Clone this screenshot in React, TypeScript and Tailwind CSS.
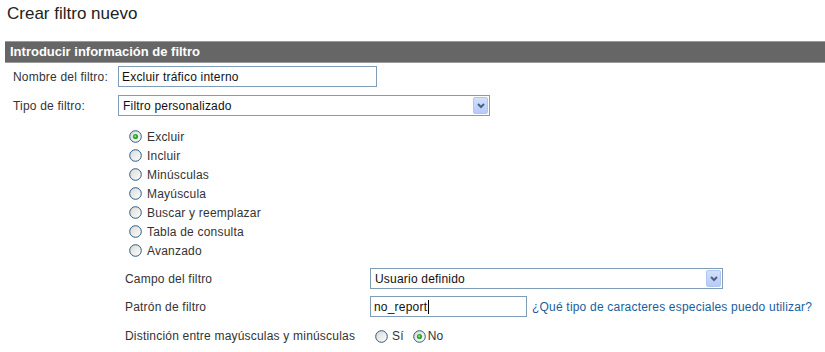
import React from 'react';

function Radio({ checked = false }: { checked?: boolean }) {
  return (
    <svg width="13" height="13" viewBox="0 0 13 13" className="shrink-0">
      <defs>
        <linearGradient id={checked ? 'rg-on' : 'rg-off'} x1="0" y1="0" x2="1" y2="1">
          <stop offset="0" stopColor="#d8d8d2" />
          <stop offset="1" stopColor="#ffffff" />
        </linearGradient>
      </defs>
      <circle cx="6.5" cy="6.5" r="5.8" fill={`url(#${checked ? 'rg-on' : 'rg-off'})`} stroke="#2a5a8a" strokeWidth="1" />
      {checked ? (
        <>
          <circle cx="6.5" cy="6.5" r="2.6" fill="#2fa62f" />
          <circle cx="6.2" cy="6.2" r="1" fill="#8fe08f" />
        </>
      ) : null}
    </svg>
  );
}

function SelectBox({ value, className }: { value: string; className: string }) {
  return (
    <div className={`flex h-[21px] items-center border border-[#7f9db9] bg-white pl-[4px] pr-[1px] ${className}`}>
      <span className="flex-1 truncate text-[12px] text-[#111]">{value}</span>
      <span className="flex h-[17px] w-[15px] items-center justify-center rounded-[2px] border border-[#b3c6f2] bg-gradient-to-b from-[#d3e0fd] to-[#b7cbf8]">
        <svg width="8" height="6" viewBox="0 0 8 6">
          <path d="M1 1 L4 4 L7 1" fill="none" stroke="#4d6185" strokeWidth="2" />
        </svg>
      </span>
    </div>
  );
}

const filterTypes = ['Excluir', 'Incluir', 'Minúsculas', 'Mayúscula', 'Buscar y reemplazar', 'Tabla de consulta', 'Avanzado'];

export default function App() {
  return (
    <div className="min-h-[352px] w-[825px] bg-white font-['Liberation_Sans',Arial,sans-serif] text-[12px] tracking-[0.2px] text-[#333]">
      <h1 className="pl-[7px] pt-[4px] text-[17px] leading-[20px] tracking-normal text-[#222]">Crear filtro nuevo</h1>

      <div className="ml-[5px] mt-[17px] h-[22px] border-y border-[#9a9a9a] bg-[#666666] pl-[5px] text-[13px] font-bold leading-[20px] tracking-normal text-white">
        Introducir información de filtro
      </div>

      <div className="mt-[3px] flex items-center pl-[13px]">
        <span className="w-[105px]">Nombre del filtro:</span>
        <div className="flex h-[21px] w-[259px] items-center border border-[#7f9db9] bg-white pl-[3px] text-[#111]">
          Excluir tráfico interno
        </div>
      </div>

      <div className="mt-[8px] flex items-center pl-[13px]">
        <span className="w-[105px]">Tipo de filtro:</span>
        <SelectBox value="Filtro personalizado" className="w-[372px]" />
      </div>

      <div className="mt-[11px] flex flex-col pl-[129px]">
        {filterTypes.map((t, i) => (
          <label key={t} className="flex h-[19px] items-center gap-[5px]">
            <Radio checked={i === 0} />
            <span>{t}</span>
          </label>
        ))}
      </div>

      <div className="mt-[8px] flex items-center pl-[125px]">
        <span className="w-[245px]">Campo del filtro</span>
        <SelectBox value="Usuario definido" className="w-[353px]" />
      </div>

      <div className="mt-[7px] flex items-center pl-[125px]">
        <span className="w-[245px]">Patrón de filtro</span>
        <div className="flex h-[21px] w-[157px] items-center border border-[#7f9db9] bg-white pl-[3px] text-[#111]">
          no_report
          <span className="ml-[1px] h-[14px] w-px bg-black" />
        </div>
        <a href="#" className="ml-[5px] text-[#1a5e9e]">¿Qué tipo de caracteres especiales puedo utilizar?</a>
      </div>

      <div className="mt-[10px] flex items-center pl-[125px]">
        <span className="w-[250px]">Distinción entre mayúsculas y minúsculas</span>
        <label className="flex items-center gap-[4px]">
          <Radio />
          <span>Sí</span>
        </label>
        <label className="ml-[9px] flex items-center gap-[2px]">
          <Radio checked />
          <span>No</span>
        </label>
      </div>
    </div>
  );
}
